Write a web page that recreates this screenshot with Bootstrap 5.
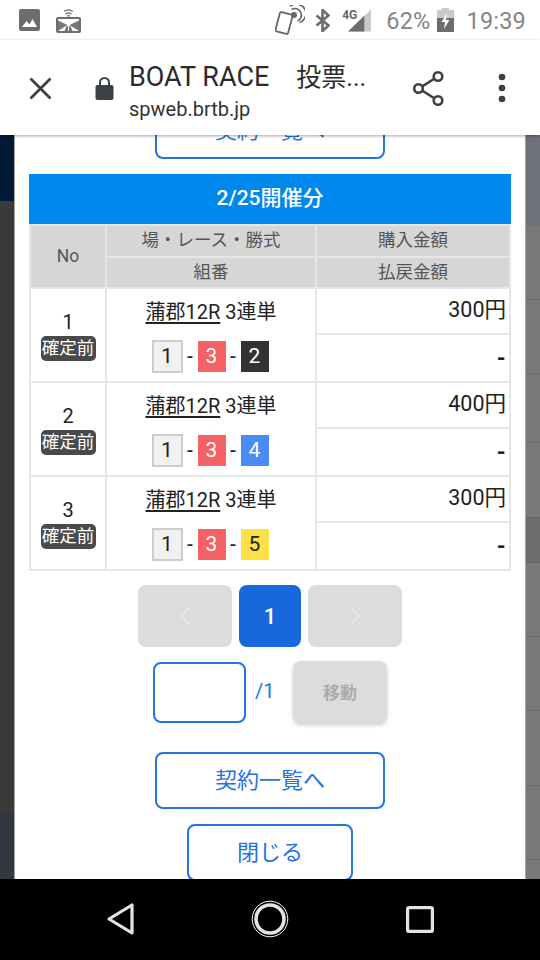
<!DOCTYPE html>
<html lang="ja">
<head>
<meta charset="utf-8">
<title>BOAT RACE 投票</title>
<link href="https://cdn.jsdelivr.net/npm/bootstrap@5.3.0/dist/css/bootstrap.min.css" rel="stylesheet">
<style>
html,body{margin:0;height:100%;overflow:hidden;background:#fff}
body{font-family:Roboto,"Noto Sans CJK JP",sans-serif;color:#222}
.app-root{width:540px;height:960px;overflow:hidden}
.status-strip{height:40px;padding:0 14px 0 19px;color:#858585;font-size:23.5px;letter-spacing:.2px}
.status-text{margin-top:4px}
.tool-strip{height:95px;padding-top:1px;background:#fff;position:relative;z-index:2;box-shadow:0 1px 3px rgba(0,0,0,.35)}
.tool-close{margin-left:29px;width:23px;height:23px}
.tool-lock{margin-left:43px;width:19px;height:24px}
.tool-text{margin-left:15px;width:270px;line-height:1;margin-top:8px}
.tool-title{font-size:27px;color:#2b2b2b;line-height:30px;white-space:pre}
.tool-title-jp{font-size:25px}
.tool-url{font-size:20px;color:#333;line-height:27px;margin-top:3px}
.tool-share{margin-left:13px;width:33px;height:37px}
.tool-dots{margin-left:53px;width:8px;height:30px}
.stage{height:744px;overflow:hidden}
.side-left{width:14px;background:linear-gradient(#001a38 0 66px,#3a3a3a 66px 677px,#333840 677px)}
.side-right{width:14px;display:flex;flex-direction:column;background:#797979}
.side-block{border-bottom:1px solid #6a6a6a;flex:none}
.sheet{width:512px;background:#fff;padding:0 14px;border-left:1px solid #a3a3a3;border-right:1px solid #a3a3a3;overflow:hidden}
.scroll-cut{margin-top:-33px}
.ghost-btn{display:block;height:57px;line-height:53px;padding:0;margin-left:auto;margin-right:auto;font-size:22px;color:#2274e2;border:2px solid #2274e2;border-radius:8px;background:#fff}
.ghost-wide{width:230px}
.ghost-narrow{width:166px}
.date-bar{height:50px;line-height:48px;margin-top:15px;background:#0088ec;color:#fff;font-size:21px;font-weight:500;text-align:center}
.bet-table{table-layout:fixed;width:480px;margin:0;border-collapse:collapse;--bs-table-bg:transparent}
.bet-table>*>tr>*{border:2px solid #e6e6e6;padding:0;text-align:center;vertical-align:middle;color:#222;box-shadow:none}
.bet-table thead th{background:#d6d6d6;color:#555;font-size:17.500px;font-weight:400;line-height:24px;padding-bottom:2px}
.bet-table .head-a{height:32px}
.bet-table .head-b{height:31px}
.bet-table .row-a{height:46px}
.bet-table .row-b{height:48px}
.bet-table .amount{text-align:right;padding-right:3px;padding-bottom:2px;font-size:21.500px;line-height:26px}
.bet-table .dash{font-weight:900;font-size:21px;padding-top:0;padding-bottom:0}
.row-no{font-size:20px;line-height:24px;margin-bottom:2px}
.state-tag{display:inline-block;background:#4a4a4a;color:#fff;font-size:17.500px;line-height:25px;height:25px;width:55px;border-radius:5px;font-weight:400;padding:0}
.race-name{font-size:20px;line-height:26px;margin-top:1px}
.race-name a{color:#222;text-decoration:underline;text-decoration-thickness:1.500px;text-underline-offset:3px}
.combo{margin-top:15px;gap:0 3px;height:33px;font-size:20px;padding-right:2px}
.boat-n{width:28px;height:31px;line-height:31px;font-size:21px;text-align:center;font-weight:400}
.boat-1{width:31px;height:33px;line-height:29px;background:#f1f1f1;border:2px solid #cdcdcd;color:#222}
.boat-2{background:#333;color:#fff}
.boat-3{background:#f46265;color:#fff}
.boat-4{background:#4a8cf5;color:#fff}
.boat-5{background:#fde046;color:#222}
.combo-dash{width:9px;text-align:center;line-height:33px;font-size:19px;font-weight:500}
.pager{margin:14px 0 0;gap:7px}
.pager .page-item .page-link{margin:0;border:0;background:#dcdcdc;border-radius:8px;height:62px;width:94px;padding:0;display:flex;align-items:center;justify-content:center}
.pager .page-item.active .page-link{background:#1668dc;color:#fff;width:62px;font-size:22px;font-weight:500}
.move-row{margin-top:14px;height:62px}
.move-input{width:93px;height:61px;margin-top:1px;border:2px solid #2274e2;border-radius:8px;background:#fff;padding:0}
.move-total{width:47px;padding-left:9px;font-size:20px;color:#2274e2;line-height:61px}
.move-btn.btn{width:94px;height:62px;padding:3px 0 0;background:#dcdcdc;border:0;color:#aaa;font-size:17px;font-weight:700;border-radius:8px;opacity:1;box-shadow:0 2px 4px rgba(0,0,0,.2)}
.go-a{margin-top:29px}
.go-b{margin-top:15px}
.nav-strip{height:81px;background:#000}
</style>
</head>
<body>
<div class="app-root d-flex flex-column">
  <div class="status-strip d-flex align-items-center">
    <svg width="21" height="22" viewBox="0 0 21 22"><rect width="21" height="22" rx="2" fill="#6d6d6d"/><path d="M3 18l4.500-6 3 3.500 3-5.500 4.500 8z" fill="#fff"/></svg>
    <svg width="25" height="26" viewBox="0 0 25 26" class="ms-3"><path d="M8 4.500q4.500-3 9 0M9.500 7q3-2 6 0" fill="none" stroke="#777" stroke-width="1.300"/><path d="M11 9.200q1.500-1 3 0" fill="none" stroke="#777" stroke-width="1.300"/><rect x="1" y="11" width="23" height="14" rx="1" fill="#fff" stroke="#6d6d6d" stroke-width="2"/><path d="M2 13.500l9.500 4.500-9.500 6zM23 13.500l-9.500 4.500 9.500 6zM10.500 19h4l2 5h-8z" fill="#777"/><path d="M12.500 18v6" stroke="#fff"/></svg>
    <div class="ms-auto d-flex align-items-center">
      <svg width="30" height="30" viewBox="0 0 30 30"><rect x="2.500" y="8" width="13" height="20" rx="1.500" transform="rotate(15 9 18)" fill="#fff" stroke="#666" stroke-width="1.800"/><circle cx="19" cy="10" r="3" fill="#666"/><path d="M16.500 4.500a6.500 6.500 0 1 1 6 11.500" fill="none" stroke="#666" stroke-width="1.600"/><path d="M15 1.500a9.500 9.500 0 1 1 9.500 16" fill="none" stroke="#666" stroke-width="1.600"/></svg>
      <svg width="15" height="23" viewBox="0 0 15 23" style="margin-left:10px"><path d="M1.500 6.500l12 10-6 5.500V1l6 5.500-12 10" fill="none" stroke="#6d6d6d" stroke-width="2.600"/></svg>
      <span class="position-relative d-inline-block" style="width:29px;height:23px;margin-left:12px">
        <span class="position-absolute fw-bold" style="left:0;top:-1px;font-size:12px;line-height:14px;letter-spacing:0;color:#666">4G</span>
        <svg width="23" height="23" viewBox="0 0 24 23" class="position-absolute" style="left:6px;top:0"><path d="M24 0v23H0z" fill="#c9c9c9"/><path d="M17 6.500V23H0z" fill="#6d6d6d"/></svg>
      </span>
      <span class="status-text" style="margin-left:15px">62%</span>
      <svg width="17" height="24" viewBox="0 0 17 24" style="margin-left:7px"><rect y="2" width="17" height="22" fill="#c9c9c9"/><rect x="5" width="7" height="3" fill="#c9c9c9"/><rect y="10" width="17" height="14" fill="#6d6d6d"/><path d="M10 5L4.500 14H8l-1 7 5.500-9H9z" fill="#fff"/></svg>
      <span class="status-text" style="margin-left:12px">19:39</span>
    </div>
  </div>

  <div class="tool-strip d-flex align-items-center">
    <svg class="tool-close" viewBox="0 0 23 23"><path d="M1.500 1.500l20 20M21.500 1.500l-20 20" stroke="#3c4043" stroke-width="2.800" fill="none"/></svg>
    <svg class="tool-lock" viewBox="0 0 19 24"><path d="M5 10V6.500a4.500 4.500 0 0 1 9 0V10" fill="none" stroke="#3c4043" stroke-width="2"/><rect x="0.500" y="9" width="18" height="15" rx="2" fill="#3c4043"/></svg>
    <div class="tool-text">
      <div class="tool-title">BOAT RACE　<span class="tool-title-jp">投票...</span></div>
      <div class="tool-url">spweb.brtb.jp</div>
    </div>
    <svg class="tool-share" viewBox="0 0 33 37"><path d="M25 7L7 18.500 25 30" fill="none" stroke="#3c4043" stroke-width="2.600"/><circle cx="26" cy="6.500" r="4.300" fill="#fff" stroke="#3c4043" stroke-width="2.600"/><circle cx="6.500" cy="18.500" r="4.300" fill="#fff" stroke="#3c4043" stroke-width="2.600"/><circle cx="26" cy="30.500" r="4.300" fill="#fff" stroke="#3c4043" stroke-width="2.600"/></svg>
    <svg class="tool-dots" viewBox="0 0 8 30"><circle cx="4" cy="4" r="3.300" fill="#3c4043"/><circle cx="4" cy="15" r="3.300" fill="#3c4043"/><circle cx="4" cy="26" r="3.300" fill="#3c4043"/></svg>
  </div>

  <div class="stage d-flex">
    <div class="side-left"></div>
    <div class="sheet">
      <div class="scroll-cut">
        <a class="ghost-btn ghost-wide btn" href="#">契約一覧へ</a>
      </div>
      <div class="date-bar">2/25開催分</div>
      <table class="table bet-table">
        <colgroup><col style="width:76px"><col style="width:210px"><col style="width:194px"></colgroup>
        <thead>
          <tr class="head-a"><th rowspan="2">No</th><th>場・レース・勝式</th><th>購入金額</th></tr>
          <tr class="head-b"><th>組番</th><th>払戻金額</th></tr>
        </thead>
        <tbody>
          <tr class="row-a">
            <td rowspan="2"><div class="row-no">1</div><span class="state-tag badge">確定前</span></td>
            <td rowspan="2">
              <div class="race-name"><a href="#">蒲郡12R</a> 3連単</div>
              <div class="combo d-flex justify-content-center align-items-center"><span class="boat-n boat-1">1</span><span class="combo-dash">-</span><span class="boat-n boat-3">3</span><span class="combo-dash">-</span><span class="boat-n boat-2">2</span></div>
            </td>
            <td class="amount">300円</td>
          </tr>
          <tr class="row-b"><td class="amount dash">-</td></tr>
          <tr class="row-a">
            <td rowspan="2"><div class="row-no">2</div><span class="state-tag badge">確定前</span></td>
            <td rowspan="2">
              <div class="race-name"><a href="#">蒲郡12R</a> 3連単</div>
              <div class="combo d-flex justify-content-center align-items-center"><span class="boat-n boat-1">1</span><span class="combo-dash">-</span><span class="boat-n boat-3">3</span><span class="combo-dash">-</span><span class="boat-n boat-4">4</span></div>
            </td>
            <td class="amount">400円</td>
          </tr>
          <tr class="row-b"><td class="amount dash">-</td></tr>
          <tr class="row-a">
            <td rowspan="2"><div class="row-no">3</div><span class="state-tag badge">確定前</span></td>
            <td rowspan="2">
              <div class="race-name"><a href="#">蒲郡12R</a> 3連単</div>
              <div class="combo d-flex justify-content-center align-items-center"><span class="boat-n boat-1">1</span><span class="combo-dash">-</span><span class="boat-n boat-3">3</span><span class="combo-dash">-</span><span class="boat-n boat-5">5</span></div>
            </td>
            <td class="amount">300円</td>
          </tr>
          <tr class="row-b"><td class="amount dash">-</td></tr>
        </tbody>
      </table>

      <ul class="pagination pager justify-content-center">
        <li class="page-item disabled"><a class="page-link" href="#"><svg width="14" height="22" viewBox="0 0 14 22"><path d="M12 2L3 11l9 9" fill="none" stroke="#e6e6e6" stroke-width="2"/></svg></a></li>
        <li class="page-item active"><a class="page-link" href="#">1</a></li>
        <li class="page-item disabled"><a class="page-link" href="#"><svg width="14" height="22" viewBox="0 0 14 22"><path d="M2 2l9 9-9 9" fill="none" stroke="#e6e6e6" stroke-width="2"/></svg></a></li>
      </ul>

      <div class="move-row d-flex justify-content-center">
        <input class="move-input form-control" type="text" aria-label="ページ">
        <span class="move-total">/1</span>
        <button class="move-btn btn" disabled>移動</button>
      </div>

      <a class="ghost-btn ghost-wide btn go-a" href="#">契約一覧へ</a>
      <a class="ghost-btn ghost-narrow btn go-b" href="#">閉じる</a>
    </div>
    <div class="side-right">
      <div class="side-block" style="height:91px;background:#6e7178;border:0"></div>
      <div class="side-block" style="height:74px"></div>
      <div class="side-block" style="height:74px"></div>
      <div class="side-block" style="height:69px"></div>
      <div class="side-block" style="height:75px"></div>
      <div class="side-block" style="height:45px;background:#6c6c6c"></div>
      <div class="side-block" style="height:74px"></div>
      <div class="side-block" style="height:74px"></div>
      <div class="side-block" style="height:75px"></div>
      <div class="side-block" style="height:74px"></div>
    </div>
  </div>

  <div class="nav-strip d-flex align-items-center">
    <svg width="540" height="81" viewBox="0 0 540 81">
      <path d="M132 26v28l-23-14z" fill="none" stroke="#e4e4e4" stroke-width="3.200" stroke-linejoin="round"/>
      <circle cx="270" cy="40" r="17.800" fill="none" stroke="#fff" stroke-width="1"/>
      <circle cx="270" cy="40" r="14" fill="none" stroke="#e4e4e4" stroke-width="3.600"/>
      <rect x="407.600" y="28.600" width="24.800" height="23.800" rx="1.500" fill="none" stroke="#e4e4e4" stroke-width="3.200"/>
    </svg>
  </div>
</div>
</body>
</html>
